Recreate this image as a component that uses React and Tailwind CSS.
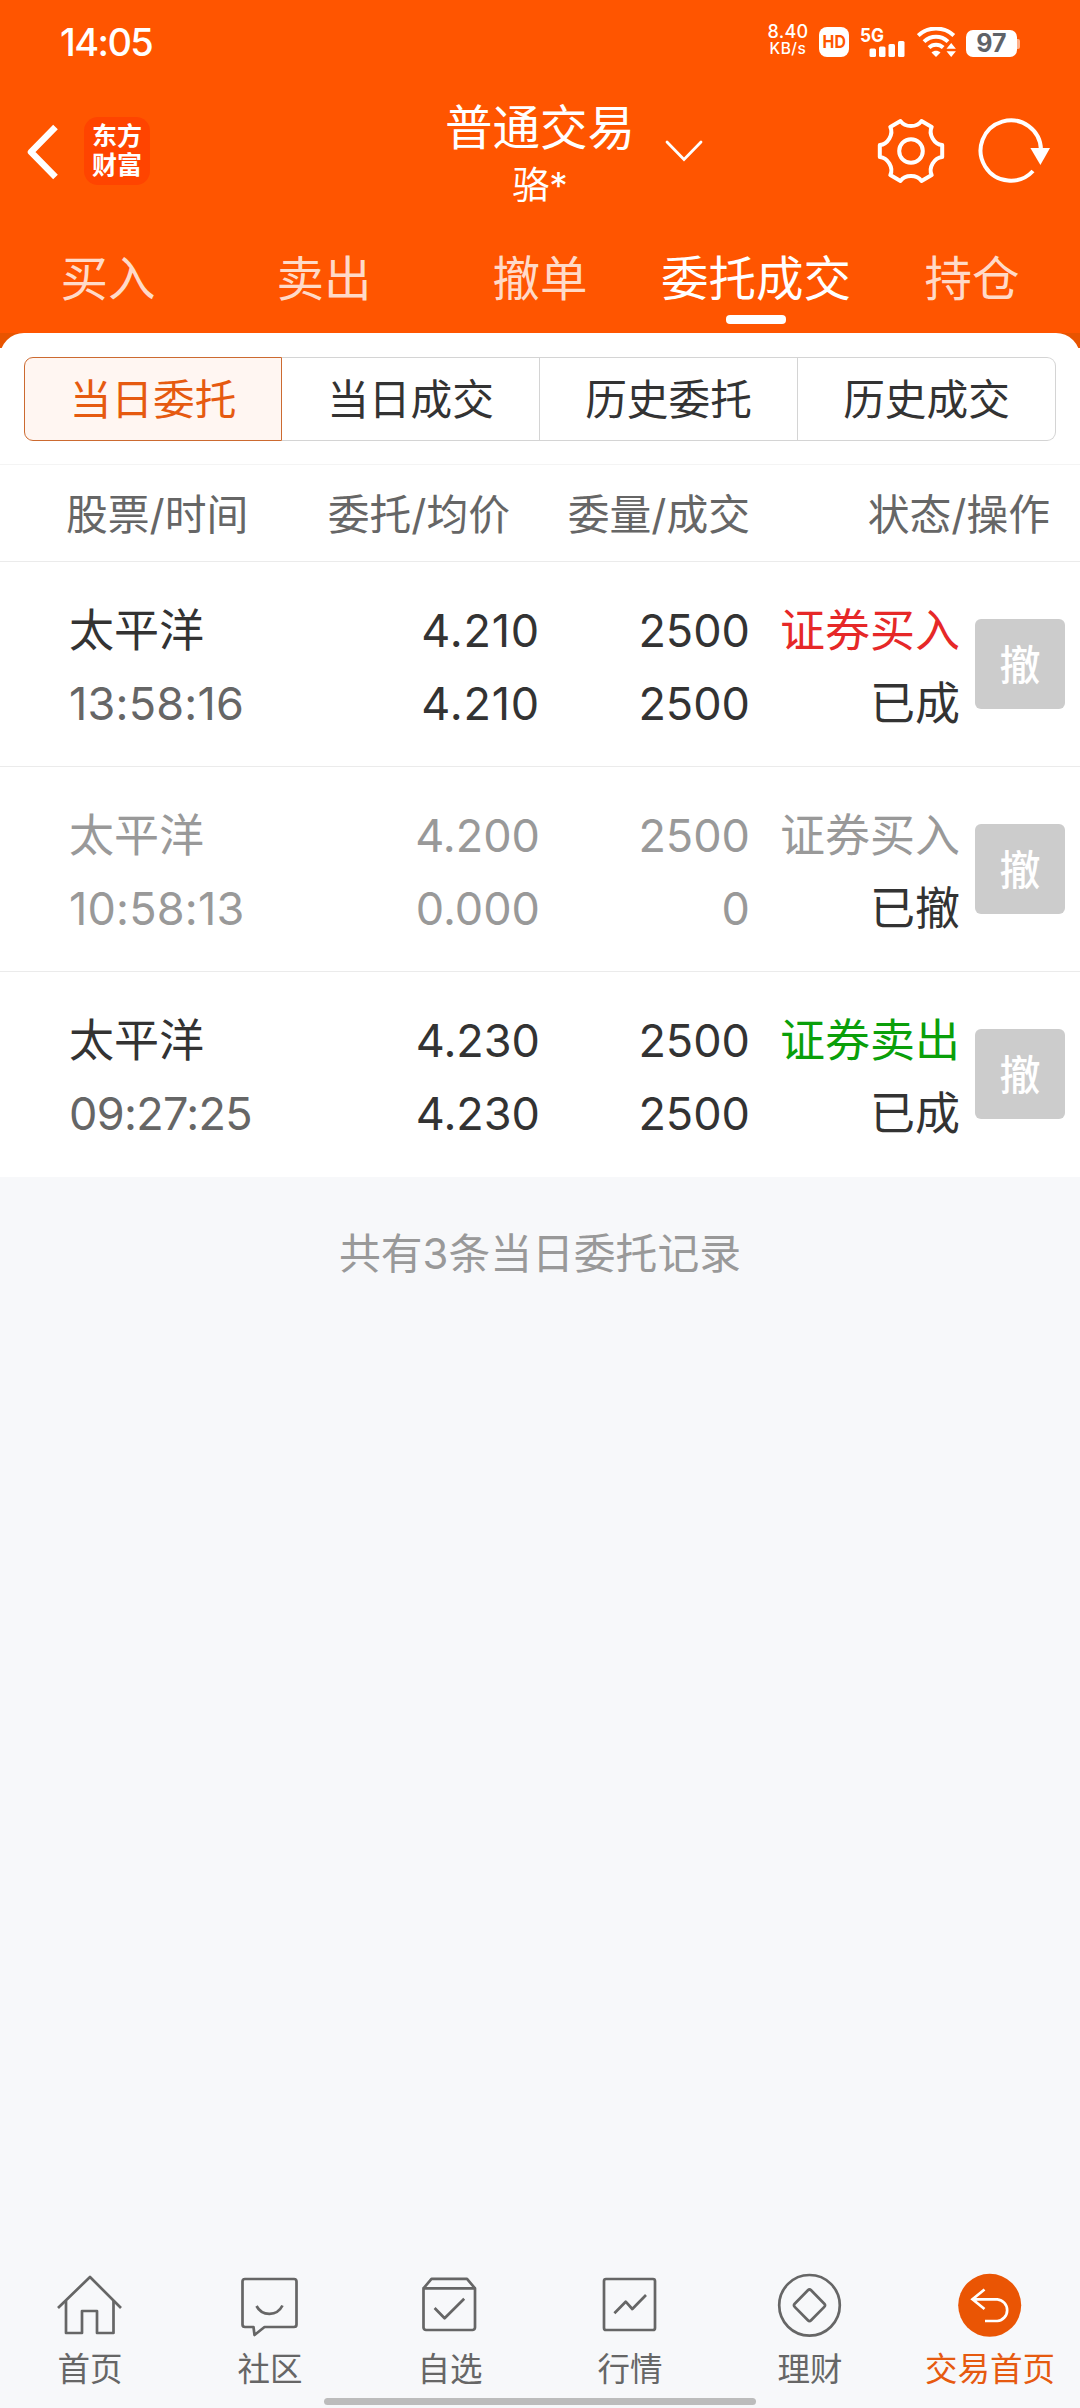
const orders = [
  {
    id: 1,
    name: '太平洋',
    time: '13:58:16',
    price: '4.210',
    avgPrice: '4.210',
    amount: '2500',
    dealAmount: '2500',
    side: '证券买入',
    sideColor: 'text-[#e62828]',
    status: '已成',
    cancelled: false
  },
  {
    id: 2,
    name: '太平洋',
    time: '10:58:13',
    price: '4.200',
    avgPrice: '0.000',
    amount: '2500',
    dealAmount: '0',
    side: '证券买入',
    sideColor: 'text-[#999999]',
    status: '已撤',
    cancelled: true
  },
  {
    id: 3,
    name: '太平洋',
    time: '09:27:25',
    price: '4.230',
    avgPrice: '4.230',
    amount: '2500',
    dealAmount: '2500',
    side: '证券卖出',
    sideColor: 'text-[#0a9f0a]',
    status: '已成',
    cancelled: false
  }
];

const tabs = ['买入', '卖出', '撤单', '委托成交', '持仓'];
const segments = ['当日委托', '当日成交', '历史委托', '历史成交'];

const StatusBar = () => (
  <div className="flex h-[84px] items-center pl-[60px] pr-[60px] text-white">
    <span className="text-[38px] font-medium leading-none tracking-[-1.6px]">14:05</span>
    <div className="ml-auto flex h-[30px] items-end">
      <div className="flex w-[40px] flex-col items-center">
        <span className="text-[18px] font-medium leading-[18px] tracking-[0.3px]">8.40</span>
        <span className="text-[15.5px] font-medium leading-[16px] tracking-[0.5px]">KB/s</span>
      </div>
      <div className="ml-[11px] flex h-[30px] w-[30px] items-center justify-center rounded-[8px] bg-white text-[18px] font-bold leading-none text-[#ff5500]">
        <span className="scale-x-[0.88]">HD</span>
      </div>
      <svg className="ml-[11px] overflow-visible" width="46" height="30" viewBox="0 0 46 30" fill="#fff">
        <text x="0" y="14.5" fontSize="19" fontWeight="700" textLength="24" lengthAdjust="spacingAndGlyphs">5G</text>
        <rect x="9.5" y="21.5" width="6.5" height="8.5" rx="1.5" />
        <rect x="19" y="19.5" width="6.5" height="10.5" rx="1.5" />
        <rect x="28.5" y="17" width="6.5" height="13" rx="1.5" />
        <rect x="38" y="14" width="6.5" height="16" rx="1.5" />
      </svg>
      <svg className="ml-[11px]" width="40" height="30" viewBox="0 0 40 30" fill="none" stroke="#fff" strokeWidth="4">
        <path d="M1.2 8.5C11 -0.8 27 -0.8 36.8 8.5" />
        <path d="M7 14.6C14 8 24 8 31 14.6" />
        <path d="M12 20.6C16 16.8 22 16.8 26.2 20.6" />
        <path d="M14.5 25.5C17 23.3 21 23.3 23.5 25.5L19 30Z" fill="#fff" stroke="none" />
        <path d="M29.5 21.8L34.2 16L38.9 21.8ZM29.5 24.2H38.9L34.2 30Z" fill="#fff" stroke="none" />
      </svg>
      <div className="ml-[9px] flex h-[27px] w-[51px] items-center justify-center rounded-[7px] bg-white text-[25px] font-bold leading-none text-[#5f6368]">
        97
      </div>
      <div className="mb-[8px] h-[10px] w-[3px] rounded-r-[2px] bg-[#ffb08a]" />
    </div>
  </div>
);

const TitleBar = () => (
  <div className="grid h-[146px] grid-cols-[1fr_auto_1fr] text-white">
    <div className="flex items-center pb-[12px] pl-[24px]">
      <svg width="36" height="60" viewBox="0 0 36 60" fill="none" stroke="#fff" strokeWidth="6.5" strokeLinejoin="round">
        <path d="M31.5 6L7 31L31.5 56" />
      </svg>
      <div className="ml-[24px] flex h-[68px] w-[66px] flex-col items-center justify-center rounded-[14px] bg-[#ff4400] text-[25px] font-bold leading-[29px]">
        <span>东方</span>
        <span>财富</span>
      </div>
    </div>
    <div className="flex flex-col items-center pt-[16px]">
      <span className="text-[47.5px] leading-[56px]">普通交易</span>
      <span className="mt-[4px] text-[37px] leading-[52px]">骆*</span>
    </div>
    <div className="flex items-center pb-[12px] pr-[30px]">
      <svg className="ml-[30px]" width="40" height="24" viewBox="0 0 40 24" fill="none" stroke="#fff" strokeWidth="2.8">
        <path d="M2 3L19 20.5L36 3" strokeLinecap="round" />
      </svg>
      <svg className="ml-auto" width="72" height="72" viewBox="0 0 72 72" fill="none" stroke="#fff" strokeWidth="4" strokeLinejoin="round">
        <path d="M25.5 6C30 12.7 42 12.7 46.5 6L56.7 11.9C53.2 19.2 59.2 29.5 67.2 30.1V41.9C59.2 42.5 53.2 52.8 56.7 60.1L46.5 66C42 59.3 30 59.3 25.5 66L15.3 60.1C18.8 52.8 12.8 42.5 4.8 41.9V30.1C12.8 29.5 18.8 19.2 15.3 11.9Z" />
        <circle cx="36" cy="36" r="11.8" />
      </svg>
      <svg className="ml-[31px]" width="72" height="72" viewBox="0 0 72 72" fill="none" stroke="#fff" strokeWidth="4">
        <path d="M63 35A30.2 30.2 0 1 0 55 56" />
        <path d="M52.4 33H72L62.4 50Z" fill="#fff" stroke="none" />
      </svg>
    </div>
  </div>
);

const MainTabs = () => (
  <div className="grid h-[103px] grid-cols-5 text-[47.5px] leading-[60px]">
    {tabs.map((tab) => {
      const active = tab === '委托成交';
      return (
        <div key={tab} className={`flex flex-col items-center pt-[19px] ${active ? 'text-white' : 'text-[#ffdac8]'}`}>
          <span className="whitespace-nowrap">{tab}</span>
          {active && <div className="mt-[6px] h-[9px] w-[60px] rounded-[4px] bg-white" />}
        </div>
      );
    })}
  </div>
);

const OrderRow = ({ order }) => {
  const main = order.cancelled ? 'text-[#999999]' : 'text-[#333333]';
  const sub = order.cancelled ? 'text-[#999999]' : 'text-[#666666]';
  // Inter's "1" is narrow, so numbers that hold one get wider tracking
  const timeTracking = order.time.includes('1') ? 'tracking-[0.2px]' : 'tracking-[-0.7px]';
  const priceTracking = order.price.includes('1') ? 'tracking-[0.8px]' : 'tracking-normal';
  return (
    <div className="flex h-[205px] items-start border-b border-[#ebebeb] pl-[69px] pr-[15px] text-[45px] leading-[73px] last:border-b-0">
      <div className="flex w-[231px] flex-col pt-[32px]">
        <span className={main}>{order.name}</span>
        <span className={`${timeTracking} ${sub}`}>{order.time}</span>
      </div>
      <div className={`flex w-[240px] flex-col items-end pt-[32px] ${priceTracking} ${main}`}>
        <span>{order.price}</span>
        <span>{order.avgPrice}</span>
      </div>
      <div className={`flex w-[210px] flex-col items-end pt-[32px] ${main}`}>
        <span>{order.amount}</span>
        <span>{order.dealAmount}</span>
      </div>
      <div className="flex w-[210px] flex-col items-end pt-[32px]">
        <span className={order.sideColor}>{order.side}</span>
        <span className="text-[#333333]">{order.status}</span>
      </div>
      <button className="ml-[15px] mt-[57px] flex h-[90px] w-[90px] items-center justify-center rounded-[6px] bg-[#cccccc] pt-[3px] text-[41px] font-medium leading-none text-white">
        撤
      </button>
    </div>
  );
};

const NavItem = ({ label, active, children }) => (
  <div className={`flex flex-col items-center text-[32.5px] leading-[44px] ${active ? 'text-[#e65a10]' : 'text-[#666666]'}`}>
    <svg width="72" height="72" viewBox="0 0 72 72" fill="none" stroke="#666" strokeWidth="2.7" strokeLinejoin="round">
      {children}
    </svg>
    <span className="mt-[8px]">{label}</span>
  </div>
);

const BottomNav = () => (
  <nav className="flex h-[140px] flex-col">
    <div className="grid h-[130px] grid-cols-6">
      <NavItem label="首页">
        <path d="M4 40L36 9L67 40" />
        <path d="M12 33V65H28V43H43V65H59.5V33" />
      </NavItem>
      <NavItem label="社区">
        <path d="M11 11H60A2.5 2.5 0 0 1 62.5 13.5V56.5A2.5 2.5 0 0 1 60 59H30.5L20.5 67L19.5 59H11A2.5 2.5 0 0 1 8.5 56.5V13.5A2.5 2.5 0 0 1 11 11Z" />
        <path d="M22.5 38C28 48.5 43 48.5 48.5 37.5" />
      </NavItem>
      <NavItem label="自选">
        <path d="M9.5 20.3H61V59.5A2.5 2.5 0 0 1 58.5 62H12A2.5 2.5 0 0 1 9.5 59.5Z" />
        <path d="M9.5 20.3L17.5 10.8H53L61 20.3" />
        <path d="M20.6 40L30.6 50.3L50.2 30.7" />
      </NavItem>
      <NavItem label="行情">
        <rect x="10" y="11" width="51" height="51" rx="2" />
        <path d="M20.4 45.3L31.7 33.7L38.3 41L52 27" />
      </NavItem>
      <NavItem label="理财">
        <circle cx="35.5" cy="37.3" r="30.3" />
        <path d="M33.9 22.3Q35.5 20.7 37.1 22.3L50.3 35.7Q51.9 37.3 50.3 38.9L37.1 52.3Q35.5 53.9 33.9 52.3L20.7 38.9Q19.1 37.3 20.7 35.7Z" />
      </NavItem>
      <NavItem label="交易首页" active>
        <circle cx="35.7" cy="37.3" r="31.5" fill="#ea5504" stroke="none" />
        <path d="M30.5 21.5L18.5 31.3L30.5 41M18.5 31.3H43.3A10.9 10.9 0 0 1 43.3 53H31" stroke="#fff" strokeLinejoin="miter" />
      </NavItem>
    </div>
    <div className="mx-auto h-[7px] w-[432px] rounded-full bg-[#bcbcbc]" />
  </nav>
);

export default function App() {
  return (
    <div className="flex h-[2408px] w-[1080px] flex-col bg-[#f7f8fa] font-['Inter','Noto_Sans_CJK_SC',sans-serif]">
      <header className="bg-[#ff5500]">
        <StatusBar />
        <TitleBar />
        <MainTabs />
      </header>
      <main className="bg-white">
        <div className="h-[15px] bg-[#e85400]" />
        <section className="-mt-[15px] rounded-t-[24px] bg-white pt-[24px]">
          <div className="mx-[24px] flex h-[84px] text-[41.7px] leading-[85px] text-[#333333]">
            {segments.map((item, i) => (
              <div
                key={item}
                className={
                  i === 0
                    ? 'w-[258px] rounded-l-[9px] border border-[#cc6a30] bg-[#fff6f2] text-center text-[#e65a10]'
                    : 'w-[258px] border-y border-r border-[#d4d4d4] text-center last:rounded-r-[9px]'
                }
              >
                {item}
              </div>
            ))}
          </div>
          <div className="mt-[23px] flex h-[98px] items-center border-y border-t-[#f4f4f4] border-b-[#ebebeb] pl-[66px] pr-[30px] pt-[5px] text-[41.8px] leading-none text-[#666666]">
            <span className="w-[260px]">股票/时间</span>
            <span className="w-[184px] text-right">委托/均价</span>
            <span className="w-[240px] text-right">委量/成交</span>
            <span className="w-[300px] text-right">状态/操作</span>
          </div>
          {orders.map((order) => (
            <OrderRow key={order.id} order={order} />
          ))}
        </section>
      </main>
      <p className="mt-[47px] text-center text-[41.8px] leading-[60px] text-[#999999]">共有3条当日委托记录</p>
      <div className="flex-1" />
      <BottomNav />
    </div>
  );
}
